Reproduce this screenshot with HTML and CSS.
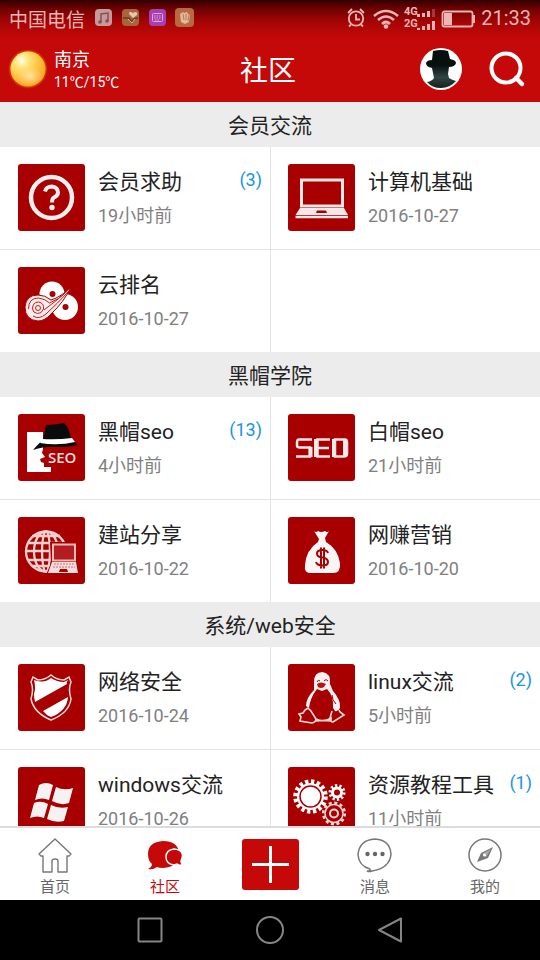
FILE: index.html
```html
<!DOCTYPE html>
<html lang="zh-CN">
<head>
<meta charset="utf-8">
<meta name="viewport" content="width=device-width, initial-scale=1">
<title>社区</title>
<link rel="stylesheet" href="styles.css">
</head>
<body>
<div class="top">
  <div class="status">
    <span class="carrier">中国电信</span>
    <svg class="notices" viewBox="0 0 100 20" aria-hidden="true">
      <rect x="0" y="1" width="17" height="17" rx="4" fill="#c69a9a"/>
      <path d="M6 14V6l7-1v8" fill="none" stroke="#8a5050" stroke-width="1.5"/><circle cx="5" cy="14" r="1.8" fill="#8a5050"/><circle cx="12" cy="13" r="1.8" fill="#8a5050"/>
      <rect x="27" y="1" width="17" height="17" rx="4" fill="#a8653b"/>
      <path d="M28 10h6l3 4 2-3 4-1" fill="none" stroke="#6d3a1c" stroke-width="1.5"/><path d="M38 10l-4-4q0-3 2-2l2 1 2-1q3 0 2 3z" fill="#e3c5ba"/><path d="M33 11l4 4 3-4" fill="none" stroke="#d9b09a"/>
      <rect x="54" y="1" width="17" height="17" rx="4" fill="#a63fb0"/>
      <rect x="57.500" y="5.500" width="10" height="8" rx="1" fill="none" stroke="#dda5dc"/><path d="M59 8h7M59 10h7M60 12h5" stroke="#dda5dc" stroke-dasharray="1.500 1"/>
      <rect x="80" y="0" width="19" height="19" rx="4" fill="#b8693f"/>
      <path d="M85 6l3-2 1 1 3-1 1 2 2 1-1 7-4 2-4-2z" fill="#e2b9a0"/><path d="M88 6l1 6M91 6v6M94 7l-1 6" stroke="#b8754f"/>
    </svg>
    <svg class="signals" viewBox="0 0 130 28" aria-hidden="true">
      <g fill="none" stroke="#efb4b4" stroke-width="1.800">
        <circle cx="10" cy="14.500" r="7.200"/><path d="M10 10v5.500h4M2 9l4-4M18 9l-4-4M5 20.500l-2 2M15 20.500l2 2"/>
        <path d="M28 12q12-10 24 0M32 16q8-7 16 0M36 20q4-4 8 0" stroke-width="2.600"/>
        <rect x="96.500" y="7.500" width="30" height="15" rx="2"/>
      </g>
      <g fill="#efb4b4">
        <circle cx="40" cy="22.500" r="2.300"/><path d="M98 9h8v12h-8zM127 11h2v8h-2z"/>
        <path d="M71 10h3v3h-3zM76 9h3v4h-3zM81 7h3v6h-3zM71 24h3v2h-3zM76 22h3v4h-3zM81 20h3v6h-3zM86 17h3v9h-3z"/><path d="M86 5h3v8h-3z" opacity=".3"/>
        <text x="58" y="11" class="network">4G</text><text x="58" y="23" class="network">2G</text>
      </g>
    </svg>
    <time class="clock">21:33</time>
  </div>
  <header class="header">
    <div class="weather">
      <svg class="sun" viewBox="0 0 40 40" aria-hidden="true">
        <defs>
          <radialGradient id="sun" cx=".32" cy=".26" r=".8"><stop offset="0" stop-color="#fffdf0"/><stop offset=".25" stop-color="#ffe57a"/><stop offset=".6" stop-color="#ffc23e"/><stop offset="1" stop-color="#f9a21c"/></radialGradient>
          <radialGradient id="glow"><stop offset=".8" stop-color="#f58a10"/><stop offset="1" stop-color="#e05008" stop-opacity="0"/></radialGradient>
          <radialGradient id="shine"><stop offset="0" stop-color="#ffe9b0" stop-opacity=".9"/><stop offset="1" stop-color="#ffd890" stop-opacity="0"/></radialGradient>
        </defs>
        <circle cx="20" cy="20" r="20" fill="url(#glow)"/><circle cx="20" cy="20" r="17.500" fill="url(#sun)"/><ellipse cx="22" cy="27" rx="13" ry="10" fill="url(#shine)"/>
      </svg>
      <div class="place"><div class="city">南京</div><div class="temperature">11℃/15℃</div></div>
    </div>
    <h1 class="title">社区</h1>
    <div class="actions">
      <button class="action" type="button" aria-label="个人头像"><svg viewBox="0 0 42 42">
        <defs><linearGradient id="coat" x1="0" y1="0" x2="0" y2="1"><stop offset=".4" stop-color="#07100f"/><stop offset=".72" stop-color="#324441"/><stop offset="1" stop-color="#10211e"/></linearGradient></defs>
        <circle cx="21" cy="21" r="21" fill="#fff"/>
        <path d="M13 3q8-2 15 0l2 8q6 1 6 4-1 4-7 4l-1 7 1 4q3 2 7 3-6 7-15 7T7 34q5-1 7-4l-1-5-1-5q-6-1-6-5 1-3 6-3z" fill="url(#coat)"/>
      </svg></button>
      <button class="action" type="button" aria-label="搜索"><svg viewBox="0 0 42 42"><circle cx="20" cy="20" r="14.500" fill="none" stroke="#fff" stroke-width="4"/><path d="M30 30l6 6" stroke="#fff" stroke-width="4.500" stroke-linecap="round"/></svg></button>
    </div>
  </header>
</div>

<main class="forums">
  <section>
    <h2 class="heading">会员交流</h2>
    <div class="grid">
      <a class="forum" href="#help">
        <svg class="icon" viewBox="0 0 67 67"><circle cx="33.500" cy="33.500" r="20.500" fill="none" stroke="#f5eeee" stroke-width="4.500"/><path d="M27 27.500q1-5 7-5 6 1 6 6 0 3-4 5-2 1-2 5" fill="none" stroke="#f5eeee" stroke-width="4"/><circle cx="34" cy="43.500" r="2.700" fill="#f5eeee"/></svg>
        <span class="info"><span class="name">会员求助</span><span class="date">19小时前</span></span><span class="count">(3)</span>
      </a>
      <a class="forum" href="#computer">
        <svg class="icon" viewBox="0 0 67 67"><rect x="13.500" y="16" width="41" height="26" fill="none" stroke="#f5e8e8" stroke-width="3"/><path d="M12 44h44l4 7H7.500z" fill="#f5e8e8"/><path d="M7.500 53h52.500" stroke="#f5e8e8" stroke-width="2.500"/><path d="M29 46.500h9l1 2.500H28z" fill="#a80000"/></svg>
        <span class="info"><span class="name">计算机基础</span><span class="date">2016-10-27</span></span>
      </a>
      <a class="forum" href="#ranking">
        <svg class="icon" viewBox="0 0 67 67"><circle cx="34" cy="27" r="12.500" fill="#fff"/><circle cx="47" cy="40" r="13" fill="#fff"/><circle cx="34.500" cy="27" r="3" fill="#a80000"/><circle cx="47.500" cy="40" r="3" fill="#a80000"/><path d="M7 40q1-12 13-12 7 0 13 5 10-3 20-13-7 15-20 27-6 7-13 7Q7 53 7 40z" fill="#fbeaea" stroke="#a80000" stroke-width="1"/><g fill="none" stroke="#b52525" stroke-width="1"><circle cx="20" cy="41" r="2.500"/><path d="M14.500 42q0-7 6-7 6 1 5 7-2 5-6 4.500-4.500-.5-5-4.500M10.500 42q0-11 10-11 7 1 11 5 9-3 18-12M15 49q6 4 13-2 12-11 22-22M26 43q11-8 21-17"/></g></svg>
        <span class="info"><span class="name">云排名</span><span class="date">2016-10-27</span></span>
      </a>
      <div class="forum"></div>
    </div>
  </section>
  <section>
    <h2 class="heading">黑帽学院</h2>
    <div class="grid">
      <a class="forum" href="#blackhat">
        <svg class="icon" viewBox="0 0 67 67"><path d="M9 18h16v17l-1 4 3 4-5 2 1 3 3 1v4h7v5H9z" fill="#fff"/><path d="M15 36q6-7 10-10l3-15q8 0 18-2 5 4 7 16l7 6q-8 2-22 2-10-1-23 3z" fill="#0b0b0b"/><path d="M24 25q15 1 30-1l3 4q-17 4-35 1z" fill="#fff"/><text x="30" y="49" class="hat-label">SEO</text></svg>
        <span class="info"><span class="name">黑帽seo</span><span class="date">4小时前</span></span><span class="count">(13)</span>
      </a>
      <a class="forum" href="#whitehat">
        <svg class="icon" viewBox="0 0 67 67"><g fill="none" stroke="#f5e8e8"><path d="M24 25.500H11q-2 0-2 3v3q0 2 3 2h10v9H8M42 25.500H29.500v17H42M29 34h12" stroke-width="2.500"/><path d="M22.500 33v10M28 25v18" stroke-width="4"/><path d="M47 25.500h10q2 0 2 3V40q0 2.500-3 2.500h-9z" stroke-width="2.500"/><path d="M46 25v18M57 26v16" stroke-width="4"/></g></svg>
        <span class="info"><span class="name">白帽seo</span><span class="date">21小时前</span></span>
      </a>
      <a class="forum" href="#site">
        <svg class="icon" viewBox="0 0 67 67"><g fill="none" stroke="#f3d0d0" stroke-width="2.300"><circle cx="28" cy="34.500" r="20"/><ellipse cx="28" cy="34.500" rx="12" ry="20"/><ellipse cx="28" cy="34.500" rx="4" ry="20"/><path d="M8 34h40M10 26h36M14 19h28M10 43h36M14 49h28"/></g><path d="M32 25h28v22l2 11H28l5-12z" fill="#a80000"/><rect x="35" y="27.500" width="22" height="16" fill="#b11d20" stroke="#f1b9b9" stroke-width="2"/><path d="M34 45h24l2 11H30z" fill="#f5dddd"/><path d="M36 47h20M35 50h22" stroke="#cf6a6a" stroke-dasharray="2 1"/><path d="M42 52h7l1 3h-9z" fill="#a80000"/></svg>
        <span class="info"><span class="name">建站分享</span><span class="date">2016-10-22</span></span>
      </a>
      <a class="forum" href="#marketing">
        <svg class="icon" viewBox="0 0 67 67"><path d="M26 14q2 2 4 0 3 2 7 0 2 2 4 0l-4 7 1 4q12 7 14 21 1 10-7 10H22q-6 0-5-8 1-15 13-23l1-3z" fill="#faf5f5"/><path d="M40 36q-1-3-5.500-3-5.500 0-5.500 3.500 0 3.500 5.500 4 5.500 1 5.500 4.500 0 3.500-5.500 3.500-5.500 0-6.500-3.500M33 30.500v21M36 30.500v21" fill="none" stroke="#a80000" stroke-width="2"/></svg>
        <span class="info"><span class="name">网赚营销</span><span class="date">2016-10-20</span></span>
      </a>
    </div>
  </section>
  <section>
    <h2 class="heading">系统/web安全</h2>
    <div class="grid">
      <a class="forum" href="#security">
        <svg class="icon" viewBox="0 0 67 67"><path d="M33 11q6 5 13 5l5-3 2 5q-3 7 0 17-2 14-20 21-17-7-20-21 3-10 0-17l2-5 5 3q7 0 13-5z" fill="none" stroke="#f5dada" stroke-width="1.500"/><path d="M33 14q6 4 13 4l4-2q-2 3-1 4L17 38q-1-4-1-8 2-6 0-14 10 4 17-2zM50 33q-1 14-17 20-5-2-8-6z" fill="#fff"/></svg>
        <span class="info"><span class="name">网络安全</span><span class="date">2016-10-24</span></span>
      </a>
      <a class="forum" href="#linux">
        <svg class="icon" viewBox="0 0 67 67"><path d="M26 18q0-10 8.500-10Q43 9 42 20l3 7q8 9 7 17-2 4-5 3l-2-3q1-12-6-19l-5 2-5-2q-7 9-8 19l-3-2q0-8 8-16z" fill="#fbf2f2"/><path d="M29 18q1-3 3-1M36 17q2-3 4 0M44 31q0 5 4 9" fill="none" stroke="#a80000"/><path d="M29 20q4-3 9 0l-2 3q-3 2-6 0z" fill="#b81414"/><path d="M17 46l-2 3-4 1 2 3-1 4 12 2q4-1 4-4l-5-8-3-3zM44 47l-2 7q0 4 3 4l11-7-4-3-1-2M28 55q8 4 15-1v3q-7-1-15 0" fill="none" stroke="#f6dada" stroke-width="1.600"/></svg>
        <span class="info"><span class="name">linux交流</span><span class="date">5小时前</span></span><span class="count">(2)</span>
      </a>
      <a class="forum" href="#windows">
        <svg class="icon" viewBox="0 0 67 67"><path d="M21 18q7-4 14 0l-4 15q-7-3-14 0zM38 20q8 4 17 1l-4 15q-8 3-17-2zM16 36q7-3 14 1l-4 14q-7-3-14 0zM33 38q8 4 17 2l-4 14q-9 2-17-2z" fill="#f6f2f2"/></svg>
        <span class="info"><span class="name">windows交流</span><span class="date">2016-10-26</span></span>
      </a>
      <a class="forum" href="#resources">
        <svg class="icon" viewBox="0 0 67 67"><circle cx="22.500" cy="29.500" r="13.500" fill="#fff"/><circle cx="22.500" cy="29.500" r="15" fill="none" stroke="#fff" stroke-width="4.500" stroke-dasharray="3.300 2.590"/><circle cx="22.500" cy="29.500" r="10.500" fill="none" stroke="#a80000" stroke-width="1.500"/><circle cx="49" cy="25.500" r="4.500" fill="none" stroke="#fff" stroke-width="3"/><circle cx="49" cy="25.500" r="7" fill="none" stroke="#fff" stroke-width="3" stroke-dasharray="2.200 2.200"/><g fill="none" stroke="#f6dada"><circle cx="46" cy="46.500" r="9" stroke-width="1.500"/><circle cx="46" cy="46.500" r="10.800" stroke-width="2.500" stroke-dasharray="3 2.650"/><circle cx="46" cy="46.500" r="4" stroke-width="2"/></g></svg>
        <span class="info"><span class="name">资源教程工具</span><span class="date">11小时前</span></span><span class="count">(1)</span>
      </a>
    </div>
  </section>
</main>

<nav class="tabs">
  <a class="tab" href="#home"><svg viewBox="0 0 36 36"><path d="M2 17L18 2l16 15-2 2h-2v16h-9V24q0-2-3-2t-3 2v11H6V19H4z" fill="none" stroke="#777" stroke-width="1.400" stroke-linejoin="round"/></svg>首页</a>
  <a class="tab active" href="#community" aria-current="page"><svg viewBox="0 0 36 36"><path d="M16 4q15 0 16 12 0 14-16 15-4 0-6-1-4 3-9 2 4-2 4-5-4-3-4-10Q1 5 16 4z" fill="#c50808"/><path d="M27 12q-8 1-8 8t8 8l3-1q2 2 5 1l-1-4q5-11-7-12z" fill="#c50808" stroke="#fff" stroke-width="1.500"/></svg>社区</a>
  <button class="compose" type="button" aria-label="发布"><svg viewBox="0 0 57 51"><path d="M10 25.500h37M28.500 7v37" stroke="#fff" stroke-width="3"/></svg></button>
  <a class="tab" href="#messages"><svg viewBox="0 0 36 36"><path d="M13 32q-11-3-12-14Q2 3 18 2q15 1 16 15-1 14-19 17-3 1-5 0 4 0 3-2z" fill="none" stroke="#777" stroke-width="1.500"/><g fill="#666"><circle cx="10.500" cy="17" r="2.200"/><circle cx="18" cy="17" r="2.200"/><circle cx="25.500" cy="17" r="2.200"/></g></svg>消息</a>
  <a class="tab" href="#mine"><svg viewBox="0 0 36 36"><circle cx="18" cy="18" r="16" fill="none" stroke="#777" stroke-width="1.500"/><path d="M26 10l-5 11-11 4 4-9z" fill="#777"/><path d="M24 12l-9 5 4 3z" fill="#aaa"/><circle cx="17.500" cy="18" r="1.500" fill="#fff"/></svg>我的</a>
</nav>
<div class="system">
  <button type="button" aria-label="最近任务"><svg viewBox="0 0 30 30"><rect x="3.500" y="3.500" width="23" height="23" rx="1" fill="none" stroke="#858585" stroke-width="2"/></svg></button>
  <button type="button" aria-label="主屏幕"><svg viewBox="0 0 30 30"><circle cx="15" cy="15" r="13" fill="none" stroke="#858585" stroke-width="2"/></svg></button>
  <button type="button" aria-label="返回"><svg viewBox="0 0 30 30"><path d="M26 3.500v23L4 15z" fill="none" stroke="#858585" stroke-width="2" stroke-linejoin="round"/></svg></button>
</div>
</body>
</html>
```
FILE: styles.css
```css
* {
  box-sizing: border-box;
}

body {
  display: flex;
  flex-direction: column;
  height: 100vh;
  margin: 0;
  background: #fff;
  color: #222;
  font-family: Roboto, "Noto Sans CJK SC", sans-serif;
}

a {
  color: inherit;
  text-decoration: none;
}

button {
  padding: 0;
  border: 0;
  background: none;
}

svg {
  display: block;
  flex: none;
}

.top {
  flex: none;
  background: #c50808 linear-gradient(#300000, #6c0202 8px, #a50505 22px, #c50808 38px) no-repeat;
  color: #fff;
}

.status {
  display: flex;
  align-items: center;
  height: 36px;
  padding: 0 9px;
  color: #efb4b4;
}

.carrier {
  font-size: 19px;
}

.notices {
  width: 100px;
  height: 20px;
  margin-left: 10px;
}

.signals {
  width: 130px;
  height: 28px;
  margin-left: auto;
}

.network {
  font-size: 11px;
  font-weight: 700;
}

.clock {
  margin-left: 5px;
  font-size: 20px;
}

.header {
  display: grid;
  grid-template-columns: 1fr auto 1fr;
  align-items: center;
  height: 66px;
  padding: 0 12px 0 8px;
}

.weather {
  display: flex;
  align-items: center;
  gap: 6px;
}

.sun {
  width: 40px;
  height: 40px;
}

.place {
  padding-top: 4px;
}

.city {
  font-size: 18px;
  line-height: 22px;
}

.temperature {
  font-size: 14px;
  line-height: 22px;
}

.title {
  margin: 0;
  font-size: 28px;
  font-weight: 400;
}

.actions {
  display: flex;
  justify-content: flex-end;
  gap: 24px;
}

.action {
  width: 42px;
  height: 42px;
}

.forums {
  flex: 1;
  min-height: 0;
  overflow-y: auto;
  scrollbar-width: none;
}

.heading {
  margin: 0;
  padding-top: 3px;
  background: #ececec;
  font-size: 21px;
  font-weight: 400;
  line-height: 42px;
  text-align: center;
}

.grid {
  display: grid;
  grid-template-columns: 1fr 1fr;
}

.forum {
  display: flex;
  align-items: flex-start;
  min-height: 102px;
  padding: 17px 8px 17px 18px;
}

.forum:nth-child(even) {
  padding-left: 17px;
  border-left: 1px solid #e4e4e4;
}

.forum:nth-child(-n + 2) {
  min-height: 103px;
  border-bottom: 1px solid #e4e4e4;
}

.icon {
  width: 67px;
  height: 67px;
  border-radius: 3px;
  background: #a80000;
}

.hat-label {
  fill: #f7dede;
  font-family: "Open Sans", sans-serif;
  font-size: 15px;
  font-weight: 600;
}

.info {
  display: flex;
  flex: 1;
  flex-direction: column;
  gap: 8px;
  padding: 4px 0 0 13px;
  white-space: nowrap;
}

.name {
  font-size: 21px;
  line-height: 28px;
}

.date {
  color: #808080;
  font-size: 18px;
  line-height: 24px;
}

.count {
  padding-top: 4px;
  color: #1895e6;
  font-size: 18px;
  line-height: 24px;
}

.tabs {
  display: grid;
  flex: none;
  grid-template-columns: 11fr 11fr 10fr 11fr 11fr;
  align-items: center;
  justify-items: center;
  height: 74px;
  border-top: 2px solid #dcdcdc;
  background: #fff;
}

.tab {
  display: flex;
  flex-direction: column;
  align-items: center;
  gap: 3px;
  padding-top: 6px;
  color: #666;
  font-size: 15px;
  line-height: 22px;
}

.tab svg {
  width: 36px;
  height: 36px;
}

.active {
  color: #c50808;
}

.compose {
  width: 57px;
  height: 51px;
  border-radius: 3px;
  background: #c50808;
}

.system {
  display: flex;
  flex: none;
  align-items: center;
  justify-content: center;
  gap: 90px;
  height: 60px;
  background: #000;
}

.system svg {
  width: 30px;
  height: 30px;
}
```
